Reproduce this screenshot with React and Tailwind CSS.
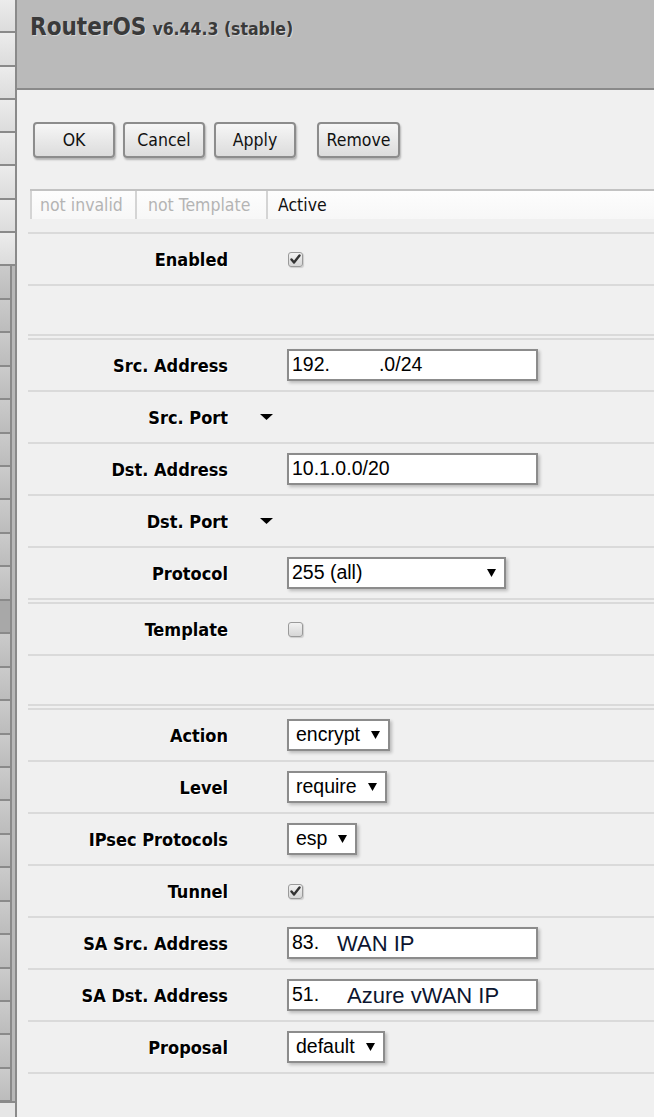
const ui = "font-['DejaVu_Sans_Condensed','DejaVu_Sans',sans-serif]"
const arial = "font-['Liberation_Sans',Arial,sans-serif]"

function Tri({ className = '' }) {
  return (
    <svg width="9" height="8" viewBox="0 0 9 8" className={className}>
      <polygon points="0,0 9,0 4.5,8" fill="#000" />
    </svg>
  )
}

function Strip() {
  const top = Array.from({ length: 8 }, (_, i) => i)
  const bottom = Array.from({ length: 25 }, (_, i) => i)
  return (
    <div className="flex h-full w-[17px] shrink-0 flex-col bg-[#8a8a8a]">
      <div className="flex w-[15px] flex-col gap-[2px]">
        {top.map((i) => (
          <div key={i} className="h-[31.3px] bg-gradient-to-b from-[#ececec] to-[#dcdcdc]" />
        ))}
      </div>
      <div className="flex flex-1 overflow-hidden py-[2px]">
        <div className="flex w-[10px] flex-col gap-[2px]">
          {bottom.map((i) => (
            <div
              key={i}
              className={`h-[31.45px] shrink-0 ${i === 10 ? 'bg-[#a8a8a8]' : 'bg-gradient-to-b from-[#cbcbcb] to-[#bcbcbc]'}`}
            />
          ))}
        </div>
        <div className="ml-[2px] w-[3px] bg-[#b8b8b8]" />
      </div>
      <div className="h-[14px] w-[15px] shrink-0 bg-[#e6e6e6]" />
    </div>
  )
}

function Button({ children, className = '' }) {
  return (
    <div
      className={`flex h-[36px] w-[82px] items-center justify-center rounded-[4px] border-2 border-[#8c8c8c] bg-gradient-to-b from-[#f6f6f6] to-[#dcdcdc] text-[17.5px] text-[#111] shadow-[1px_2px_2px_rgba(0,0,0,0.25)] ${className}`}
    >
      {children}
    </div>
  )
}

function Checkbox({ checked }) {
  return (
    <div className="ml-[1px] flex h-[15px] w-[15px] items-center justify-center rounded-[3px] border border-[#9a9a9a] bg-gradient-to-b from-[#f2f2f2] to-[#d6d6d6] shadow-[1px_1px_1px_rgba(0,0,0,0.15)]">
      {checked && (
        <svg width="11" height="10" viewBox="0 0 11 10">
          <path d="M1.5 5.5 L4 8.5 L9.5 1.5" fill="none" stroke="#333" strokeWidth="2.4" strokeLinecap="round" strokeLinejoin="round" />
        </svg>
      )}
    </div>
  )
}

function TextBox({ children }) {
  return (
    <div
      className={`flex h-[32px] w-[251px] items-center whitespace-pre border-2 border-[#8c8c8c] bg-white pl-[3px] text-[19.5px] text-black shadow-[2px_2px_3px_rgba(0,0,0,0.22)] ${arial}`}
    >
      {children}
    </div>
  )
}

function Select({ value }) {
  return (
    <div
      className={`flex h-[32px] items-center border-2 border-[#8c8c8c] bg-white pl-[7px] pr-[8px] text-[19.5px] text-black shadow-[2px_2px_3px_rgba(0,0,0,0.22)] ${arial}`}
    >
      <span>{value}</span>
      <Tri className="ml-[11px]" />
    </div>
  )
}

function Row({ label, children, h = 'h-[52px]' }) {
  return (
    <div className={`flex ${h} items-center border-b-2 border-[#dadada]`}>
      <div className="w-[200px] shrink-0 text-right text-[18px] font-bold text-black [text-shadow:1px_1px_0_#fff]">
        {label}
      </div>
      {children}
    </div>
  )
}

function Value({ children }) {
  return <div className="ml-[59px] flex items-center">{children}</div>
}

function PortArrow() {
  return (
    <svg width="13" height="6" viewBox="0 0 13 6" className="ml-[32px]">
      <polygon points="0,0 13,0 6.5,6" fill="#000" />
    </svg>
  )
}

export default function App() {
  return (
    <div className={`flex h-[1117px] w-[654px] overflow-hidden bg-[#f0f0f0] ${ui}`}>
      <Strip />
      <div className="flex min-w-0 flex-1 flex-col">
        <header className="h-[90px] shrink-0 border-b-2 border-[#8a8a8a] bg-[#bababa] pl-[13px] pt-[9px]">
          <div className="flex items-baseline gap-[6px] font-bold text-[#3a3a3a] [text-shadow:1px_1px_0_#d4d4d4]">
            <span className="text-[24px] leading-normal">RouterOS</span>
            <span className="text-[17.5px]">v6.44.3 (stable)</span>
          </div>
        </header>

        <div className="flex pl-[16px] pt-[32px]">
          <Button>OK</Button>
          <Button className="ml-[8px]">Cancel</Button>
          <Button className="ml-[9px]">Apply</Button>
          <Button className="ml-[21px] w-[83px]">Remove</Button>
        </div>

        <div className="ml-[13px] mt-[31px] flex h-[30px] border-t-2 border-[#c2c2c2] text-[17.5px]">
          <div className="flex w-[105px] items-center border-l-2 border-[#d4d4d4] bg-gradient-to-b from-[#fdfdfd] to-[#f7f7f7] pl-[8px] text-[#b4b4b4]">
            not invalid
          </div>
          <div className="flex w-[131px] items-center border-l-2 border-[#d4d4d4] bg-gradient-to-b from-[#fdfdfd] to-[#f7f7f7] pl-[11px] text-[#b4b4b4]">
            not Template
          </div>
          <div className="flex flex-1 items-center border-l-2 border-[#d4d4d4] bg-gradient-to-b from-[#fdfdfd] to-[#f7f7f7] pl-[10px] text-[#111]">
            Active
          </div>
        </div>

        <div className="ml-[11px] mt-[13px] border-t-2 border-[#dadada]">
          <Row label="Enabled">
            <Value>
              <Checkbox checked />
            </Value>
          </Row>
          <Row label="" h="h-[50px]" />
        </div>

        <div className="ml-[11px] mt-[2px] border-t-2 border-[#dadada]">
          <Row label="Src. Address">
            <Value>
              <TextBox>
                <span>192.</span>
                <span className="ml-[49px]">.0/24</span>
              </TextBox>
            </Value>
          </Row>
          <Row label="Src. Port">
            <PortArrow />
          </Row>
          <Row label="Dst. Address">
            <Value>
              <TextBox>10.1.0.0/20</TextBox>
            </Value>
          </Row>
          <Row label="Dst. Port">
            <PortArrow />
          </Row>
          <Row label="Protocol">
            <Value>
              <div
                className={`flex h-[32px] w-[219px] items-center justify-between border-2 border-[#8c8c8c] bg-white pl-[3px] pr-[8px] text-[19.5px] text-black shadow-[2px_2px_3px_rgba(0,0,0,0.22)] ${arial}`}
              >
                <span>255 (all)</span>
                <Tri />
              </div>
            </Value>
          </Row>
        </div>

        <div className="ml-[11px] mt-[2px] border-t-2 border-[#dadada]">
          <Row label="Template">
            <Value>
              <Checkbox />
            </Value>
          </Row>
          <Row label="" h="h-[50px]" />
        </div>

        <div className="ml-[11px] mt-[2px] border-t-2 border-[#dadada]">
          <Row label="Action">
            <Value>
              <Select value="encrypt" />
            </Value>
          </Row>
          <Row label="Level">
            <Value>
              <Select value="require" />
            </Value>
          </Row>
          <Row label="IPsec Protocols">
            <Value>
              <Select value="esp" />
            </Value>
          </Row>
          <Row label="Tunnel">
            <Value>
              <Checkbox checked />
            </Value>
          </Row>
          <Row label="SA Src. Address">
            <Value>
              <TextBox>
                <span>83.</span>
                <span className="ml-[18px] text-[22px] text-[#0c1530]">WAN IP</span>
              </TextBox>
            </Value>
          </Row>
          <Row label="SA Dst. Address">
            <Value>
              <TextBox>
                <span>51.</span>
                <span className="ml-[28px] text-[22px] text-[#0c1530]">Azure vWAN IP</span>
              </TextBox>
            </Value>
          </Row>
          <Row label="Proposal">
            <Value>
              <Select value="default" />
            </Value>
          </Row>
        </div>
      </div>
    </div>
  )
}
